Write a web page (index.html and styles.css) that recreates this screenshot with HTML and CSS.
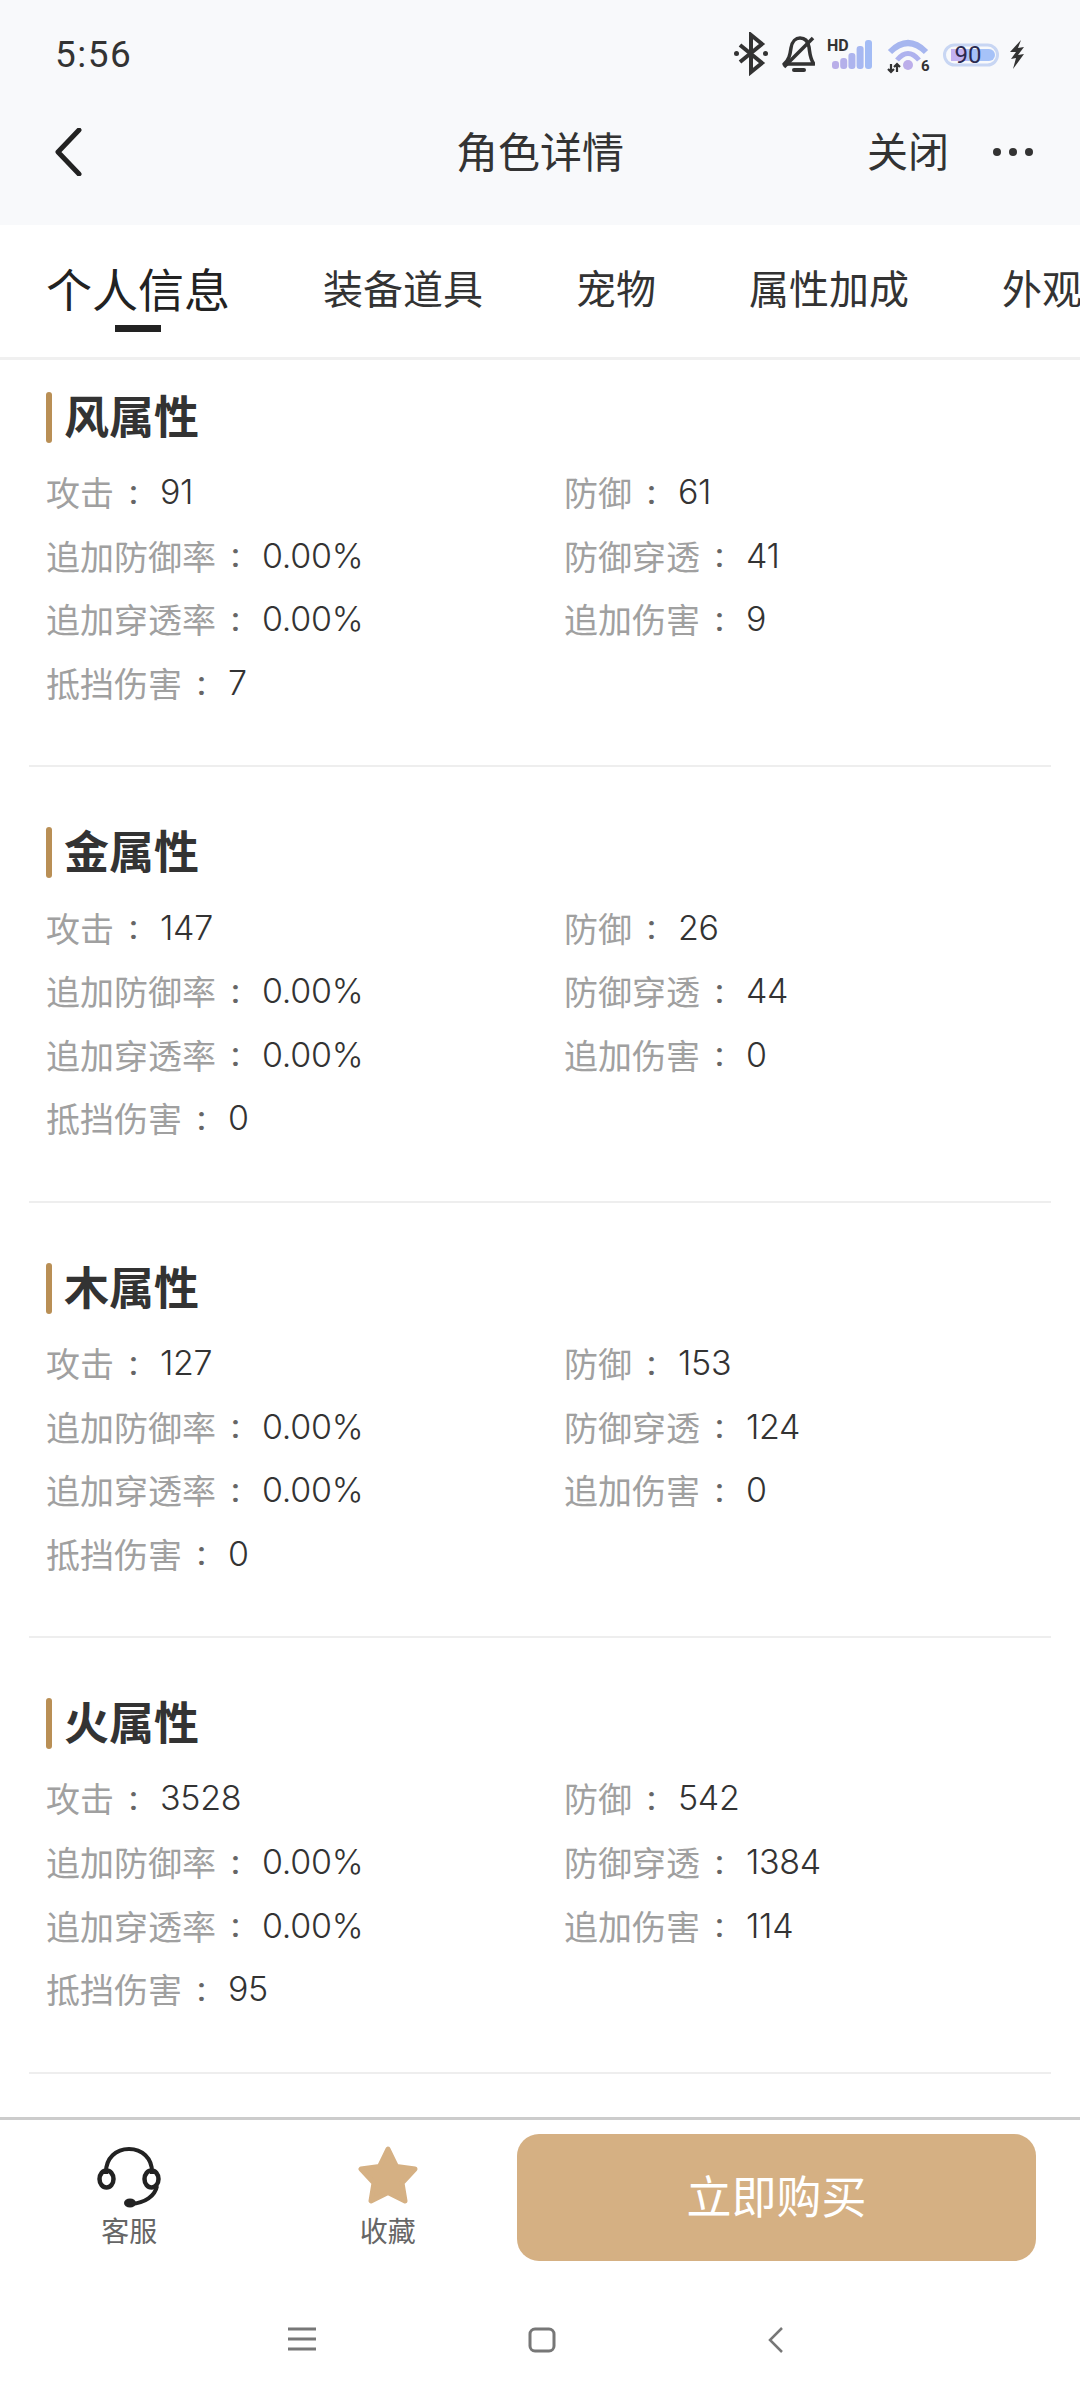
FILE: index.html
```html
<!DOCTYPE html>
<html lang="zh-CN">
<head>
  <meta charset="UTF-8">
  <meta name="viewport" content="width=device-width, initial-scale=1.0">
  <title>角色详情</title>
  <link rel="stylesheet" href="styles.css">
</head>
<body>
  <div class="page">
    <header class="top">
      <div class="status">
        <span class="time">5:56</span>
        <div class="status-icons">
          <svg width="34" height="44" viewBox="0 0 34 44"><path d="M6 13l22 18-11 9V3l11 9L6 30" fill="none" stroke="#333" stroke-width="4"/><circle cx="2.500" cy="21.500" r="2.500" fill="#333"/><circle cx="31.500" cy="21.500" r="2.500" fill="#333"/></svg>
          <svg width="37" height="44" viewBox="0 0 37 44"><g transform="translate(4 0)"><path d="M2 32c5-4 6-9 7-16 1-7 5-10 9-10 5 0 8 3 9 9 1 7 1 12 5 17z" fill="none" stroke="#333" stroke-width="3.500" stroke-linejoin="round"/><path d="M12 38h10" stroke="#333" stroke-width="4" stroke-linecap="round"/><path d="M2 35L31 6" stroke="#333" stroke-width="3.500"/></g></svg>
          <svg width="48" height="44" viewBox="0 0 48 44"><text x="2" y="19" class="tiny">HD</text><rect x="7" y="29" width="7" height="8" rx="3" fill="#b9aee8"/><rect x="15.200" y="26" width="7" height="11" rx="3" fill="#b4b0ea"/><rect x="23.400" y="21" width="7" height="16" rx="3" fill="#adb4ee"/><rect x="31.600" y="14" width="7" height="23" rx="3" fill="#a7b8f1"/><rect x="40" y="8" width="7" height="29" rx="3" fill="#a3bcf5"/></svg>
          <svg width="47" height="44" viewBox="0 0 47 44"><path d="M7 20Q25 2 43 20" fill="none" stroke="#a6b6ef" stroke-width="6"/><path d="M14 28Q25 15 36 28" fill="none" stroke="#aeb2ee" stroke-width="5"/><circle cx="25" cy="33" r="5" fill="#bcaeea"/><path d="M8 32v8M5 37l3 3 3-3M14 40v-8M11 35l3-3 3 3" fill="none" stroke="#333" stroke-width="2.200"/><text x="38" y="39" class="wifi-num">6</text></svg>
          <svg width="59" height="44" viewBox="0 0 59 44"><rect x="4.500" y="13" width="53" height="20" rx="10" fill="none" stroke="#c8d6f3" stroke-width="3"/><rect x="11" y="17" width="44" height="12" rx="6" fill="#a6c2f8"/><rect x="11" y="17" width="16" height="12" fill="#c3b2f0"/><text x="28" y="31" text-anchor="middle" class="batt">90</text></svg>
          <svg width="16" height="44" viewBox="0 0 16 44"><path d="M12 8L1 20h6L2 27l5-1-3 11 11-15-6 1 6-8-6 1z" fill="#333"/></svg>
        </div>
      </div>
      <nav class="navbar">
        <svg class="back" width="28" height="48" viewBox="0 0 28 48"><path d="M25 2L4 24l21 22" fill="none" stroke="#222" stroke-width="5" stroke-linecap="round" stroke-linejoin="round"/></svg>
        <h1 class="title">角色详情</h1>
        <span class="close">关闭</span>
        <svg class="more" width="40" height="8" viewBox="0 0 40 8"><circle cx="4" cy="4" r="4" fill="#333"/><circle cx="20" cy="4" r="4" fill="#333"/><circle cx="36" cy="4" r="4" fill="#333"/></svg>
      </nav>
    </header>

    <div class="tabs">
      <span class="tab active">个人信息</span>
      <span class="tab">装备道具</span>
      <span class="tab">宠物</span>
      <span class="tab">属性加成</span>
      <span class="tab">外观</span>
    </div>

    <main class="list">
      <section class="block">
        <h2 class="block-title">风属性</h2>
        <div class="stats">
          <div class="stat"><span class="label">攻击</span><span class="sep">:</span><span class="value">91</span></div>
          <div class="stat"><span class="label">防御</span><span class="sep">:</span><span class="value">61</span></div>
          <div class="stat"><span class="label">追加防御率</span><span class="sep">:</span><span class="value">0.00%</span></div>
          <div class="stat"><span class="label">防御穿透</span><span class="sep">:</span><span class="value">41</span></div>
          <div class="stat"><span class="label">追加穿透率</span><span class="sep">:</span><span class="value">0.00%</span></div>
          <div class="stat"><span class="label">追加伤害</span><span class="sep">:</span><span class="value">9</span></div>
          <div class="stat"><span class="label">抵挡伤害</span><span class="sep">:</span><span class="value">7</span></div>
        </div>
      </section>
      <section class="block">
        <h2 class="block-title">金属性</h2>
        <div class="stats">
          <div class="stat"><span class="label">攻击</span><span class="sep">:</span><span class="value">147</span></div>
          <div class="stat"><span class="label">防御</span><span class="sep">:</span><span class="value">26</span></div>
          <div class="stat"><span class="label">追加防御率</span><span class="sep">:</span><span class="value">0.00%</span></div>
          <div class="stat"><span class="label">防御穿透</span><span class="sep">:</span><span class="value">44</span></div>
          <div class="stat"><span class="label">追加穿透率</span><span class="sep">:</span><span class="value">0.00%</span></div>
          <div class="stat"><span class="label">追加伤害</span><span class="sep">:</span><span class="value">0</span></div>
          <div class="stat"><span class="label">抵挡伤害</span><span class="sep">:</span><span class="value">0</span></div>
        </div>
      </section>
      <section class="block">
        <h2 class="block-title">木属性</h2>
        <div class="stats">
          <div class="stat"><span class="label">攻击</span><span class="sep">:</span><span class="value">127</span></div>
          <div class="stat"><span class="label">防御</span><span class="sep">:</span><span class="value">153</span></div>
          <div class="stat"><span class="label">追加防御率</span><span class="sep">:</span><span class="value">0.00%</span></div>
          <div class="stat"><span class="label">防御穿透</span><span class="sep">:</span><span class="value">124</span></div>
          <div class="stat"><span class="label">追加穿透率</span><span class="sep">:</span><span class="value">0.00%</span></div>
          <div class="stat"><span class="label">追加伤害</span><span class="sep">:</span><span class="value">0</span></div>
          <div class="stat"><span class="label">抵挡伤害</span><span class="sep">:</span><span class="value">0</span></div>
        </div>
      </section>
      <section class="block">
        <h2 class="block-title">火属性</h2>
        <div class="stats">
          <div class="stat"><span class="label">攻击</span><span class="sep">:</span><span class="value">3528</span></div>
          <div class="stat"><span class="label">防御</span><span class="sep">:</span><span class="value">542</span></div>
          <div class="stat"><span class="label">追加防御率</span><span class="sep">:</span><span class="value">0.00%</span></div>
          <div class="stat"><span class="label">防御穿透</span><span class="sep">:</span><span class="value">1384</span></div>
          <div class="stat"><span class="label">追加穿透率</span><span class="sep">:</span><span class="value">0.00%</span></div>
          <div class="stat"><span class="label">追加伤害</span><span class="sep">:</span><span class="value">114</span></div>
          <div class="stat"><span class="label">抵挡伤害</span><span class="sep">:</span><span class="value">95</span></div>
        </div>
      </section>
    </main>

    <footer class="bottom">
      <div class="actions">
        <div class="action">
          <svg width="64" height="62" viewBox="0 0 64 62"><path d="M9 28V26C9 12 19 3 32 3s23 9 23 23v2" fill="none" stroke="#222" stroke-width="4"/><ellipse cx="9.500" cy="33" rx="7" ry="8.500" fill="none" stroke="#222" stroke-width="4.500"/><ellipse cx="54.500" cy="33" rx="7" ry="8.500" fill="none" stroke="#222" stroke-width="4.500"/><path d="M60 40c-2 10-12 17-26 18" fill="none" stroke="#222" stroke-width="4"/><ellipse cx="33" cy="57" rx="6" ry="4.500" fill="#222"/></svg>
          <span class="action-text">客服</span>
        </div>
        <div class="action">
          <svg width="60" height="62" viewBox="0 0 60 62"><path d="M30 3l8.500 17.500L57 23 44 37l3 18-17-8.500L13 55l3-18L3 23l18.500-2.500z" fill="#d5b083" stroke="#d5b083" stroke-width="5" stroke-linejoin="round"/></svg>
          <span class="action-text">收藏</span>
        </div>
      </div>
      <button class="buy">立即购买</button>
    </footer>

    <div class="sysnav">
      <svg width="28" height="24" viewBox="0 0 28 24"><path d="M0 2h28M0 12h28M0 22h28" stroke="#777" stroke-width="3"/></svg>
      <svg width="28" height="26" viewBox="0 0 28 26"><rect x="2" y="2" width="24" height="22" rx="5" fill="none" stroke="#777" stroke-width="3"/></svg>
      <svg width="16" height="26" viewBox="0 0 16 26"><path d="M14 1L2 13l12 12" fill="none" stroke="#777" stroke-width="2.500"/></svg>
    </div>
  </div>
</body>
</html>
```

FILE: styles.css
```css
* {
  box-sizing: border-box;
}
body {
  margin: 0;
  padding: 0;
  font-family: "Noto Sans CJK SC", "Noto Sans", sans-serif;
  background-color: #fff;
  color: #333;
}
.page {
  width: 1080px;
  height: 2401px;
  display: flex;
  flex-direction: column;
  overflow: hidden;
}
.top {
  height: 225px;
  background-color: #f8f9fb;
  flex-shrink: 0;
}
.status {
  height: 98px;
  padding: 10px 55px 0 55px;
  display: flex;
  justify-content: space-between;
  align-items: center;
}
.time {
  font-family: Roboto, sans-serif;
  font-size: 37px;
  letter-spacing: 1.500px;
  color: #333;
}
.status-icons {
  display: flex;
  align-items: center;
  gap: 10px;
}
.tiny {
  font-family: Roboto, sans-serif;
  font-size: 16px;
  font-weight: 700;
  fill: #333;
}
.wifi-num {
  font-family: Roboto, sans-serif;
  font-size: 15px;
  font-weight: 700;
  fill: #333;
}
.batt {
  font-family: Roboto, sans-serif;
  font-size: 24px;
  fill: #2a2a50;
}
.navbar {
  height: 108px;
  padding: 0 47px 0 54px;
  display: flex;
  align-items: center;
  position: relative;
}
.title {
  position: absolute;
  left: 0;
  right: 0;
  margin: 0 0 6px;
  text-align: center;
  font-size: 42px;
  font-weight: 400;
  color: #333;
}
.close {
  margin: 0 0 6px auto;
  font-size: 41px;
  color: #333;
}
.more {
  margin-left: 44px;
}
.tabs {
  height: 135px;
  flex-shrink: 0;
  padding: 0 0 8px 46px;
  display: flex;
  align-items: center;
  gap: 93px;
  white-space: nowrap;
  border-bottom: 3px solid #f0f0f0;
}
.tab {
  font-size: 40px;
  color: #333;
  flex-shrink: 0;
  line-height: 60px;
}
.tab.active {
  font-size: 46px;
  color: #222;
  position: relative;
}
.tab.active::after {
  content: "";
  position: absolute;
  left: 69px;
  bottom: -15px;
  width: 46px;
  height: 7px;
  background-color: #222;
}
.list {
  flex: 1;
  overflow: hidden;
}
.block {
  margin: 0 29px;
  padding: 60px 0 51px 17px;
  border-bottom: 2px solid #eee;
}
.block:first-child {
  padding-top: 32px;
}
.block-title {
  margin: 0 0 17px;
  height: 51px;
  line-height: 46px;
  padding-left: 18px;
  font-size: 45px;
  font-weight: 700;
  color: #333;
  position: relative;
}
.block-title::before {
  content: "";
  position: absolute;
  left: 0;
  top: 0;
  width: 6px;
  height: 51px;
  border-radius: 3px;
  background-color: #b98f55;
}
.stats {
  display: grid;
  grid-template-columns: 518px 1fr;
}
.stat {
  height: 63.600px;
  display: flex;
  align-items: center;
  font-size: 34px;
  white-space: nowrap;
}
.label {
  color: #a0a0a0;
  font-weight: 400;
}
.sep {
  color: #666;
  font-weight: 500;
  margin: 0 22px 0 15px;
  font-family: Roboto, sans-serif;
}
.value {
  font-family: Inter, sans-serif;
  font-weight: 300;
  letter-spacing: -0.300px;
  color: #333;
}
.bottom {
  height: 144px;
  flex-shrink: 0;
  border-top: 3px solid #ccc;
  padding: 14px 44px 0 0;
  display: flex;
  align-items: flex-start;
}
.actions {
  width: 517px;
  display: grid;
  grid-template-columns: 1fr 1fr;
}
.action {
  display: flex;
  flex-direction: column;
  align-items: center;
  padding-top: 12px;
}
.action-text {
  font-size: 28px;
  line-height: 36px;
  color: #666;
  margin-top: 4px;
}
.buy {
  width: 519px;
  height: 127px;
  border: none;
  border-radius: 22px;
  padding: 0 0 6px;
  background-color: #d5b083;
  color: #fff;
  font-family: inherit;
  font-size: 45px;
  cursor: pointer;
}
.sysnav {
  height: 140px;
  flex-shrink: 0;
  padding: 66px 296px 0 288px;
  display: flex;
  justify-content: space-between;
  align-items: flex-start;
}
```
